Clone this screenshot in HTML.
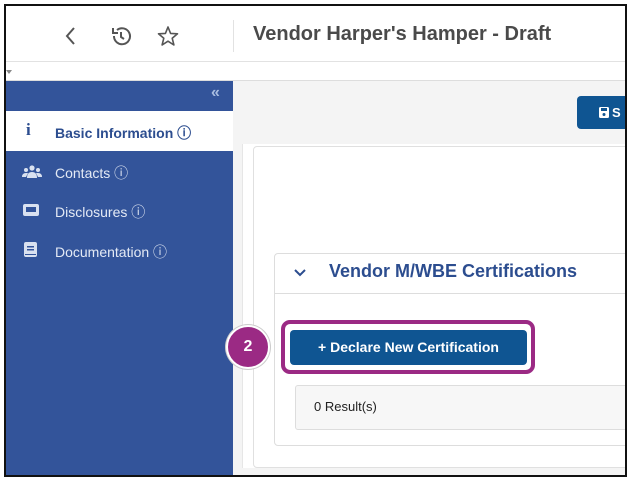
<!DOCTYPE html>
<html><head><style>
*{margin:0;padding:0;box-sizing:border-box}
body{width:632px;height:484px;background:#fff;font-family:"Liberation Sans",sans-serif;position:relative;overflow:hidden}
.frame{position:absolute;left:4px;top:4px;width:623px;height:473px;border:2px solid #111;overflow:hidden;background:#fff}
.abs{position:absolute}
</style></head><body>
<div class="frame">
 <!-- header -->
 <div class="abs" style="left:0;top:0;width:620px;height:56px;background:#fff;border-bottom:1px solid #e2e2e2"></div>
 <svg class="abs" style="left:56px;top:18px" width="140" height="24" viewBox="0 0 140 24">
  <path d="M12 4 L5 12 L12 20" fill="none" stroke="#555" stroke-width="2"/>
  <path d="M52 12 A8 8 0 1 0 55 6" fill="none" stroke="#555" stroke-width="2"/>
  <path d="M51 4 L51 9 L56 9" fill="none" stroke="#555" stroke-width="2"/>
  <path d="M59 8 L59 13 L62 15" fill="none" stroke="#555" stroke-width="2"/>
  <path d="M106 3 L108.6 9.4 L115.5 9.8 L110.2 14.2 L111.9 21 L106 17.2 L100.1 21 L101.8 14.2 L96.5 9.8 L103.4 9.4 Z" fill="none" stroke="#555" stroke-width="1.6" stroke-linejoin="round"/>
 </svg>
 <div class="abs" style="left:227px;top:14px;width:1px;height:32px;background:#e2e2e2"></div>
 <div class="abs" style="left:247px;top:17px;font-size:20px;font-weight:bold;color:#4a4a4a">Vendor Harper's Hamper - Draft</div>
 <div class="abs" style="left:0;top:64px;width:0;height:0;border-left:3px solid transparent;border-right:3px solid transparent;border-top:4px solid #888"></div>
 <div class="abs" style="left:0;top:74px;width:620px;height:1px;background:#ddd"></div>
 <!-- main grey -->
 <div class="abs" style="left:227px;top:75px;width:400px;height:400px;background:#f4f4f4"></div>
 <div class="abs" style="left:571px;top:90px;width:60px;height:33px;background:#0f5592;border-radius:4px;color:#fff;font-size:13px;font-weight:bold;padding:9px 0 0 35px">S</div>
 <svg class="abs" style="left:593px;top:101px" width="10" height="11"><rect x="0" y="0" width="10" height="11" rx="1.5" fill="#fff"/><rect x="2" y="1" width="6" height="3" fill="#0f5592"/><circle cx="5" cy="7.5" r="1.5" fill="#0f5592"/></svg>
 <div class="abs" style="left:236px;top:138px;width:400px;height:324px;background:#fff;border-left:1px solid #e6e6e6"></div>
 <div class="abs" style="left:247px;top:140px;width:400px;height:322px;background:#fff;border:1px solid #e0e0e0;border-radius:4px"></div>
 <!-- card -->
 <div class="abs" style="left:268px;top:247px;width:400px;height:193px;background:#fff;border:1px solid #ddd;border-radius:4px"></div>
 <div class="abs" style="left:268px;top:287px;width:400px;height:1px;background:#ddd"></div>
 <svg class="abs" style="left:288px;top:262px" width="12" height="10"><path d="M1 2 L6 7 L11 2" fill="none" stroke="#2c4d8f" stroke-width="2"/></svg>
 <div class="abs" style="left:323px;top:255px;font-size:18px;font-weight:bold;color:#2c4d8f">Vendor M/WBE Certifications</div>
 <!-- sidebar -->
 <div class="abs" style="left:0;top:75px;width:227px;height:400px;background:#33549a"></div>
 <div class="abs" style="left:205px;top:78px;color:#a9bde0;font-size:16px;font-weight:bold">«</div>
 <div class="abs" style="left:0;top:105px;width:227px;height:40px;background:#fff"></div>
 <div class="abs" style="left:20px;top:114px;font-family:'Liberation Serif',serif;font-weight:bold;font-size:17px;color:#2c4d8f">i</div>
 <div class="abs" style="left:49px;top:117px;font-size:14px;font-weight:bold;color:#2c4d8f">Basic Information ⓘ</div>
 <svg class="abs" style="left:16px;top:159px" width="20" height="14"><circle cx="10" cy="3" r="2.6" fill="#d9e1f0"/><circle cx="4" cy="5" r="2" fill="#d9e1f0"/><circle cx="16" cy="5" r="2" fill="#d9e1f0"/><path d="M5 13 Q5 7 10 7 Q15 7 15 13Z M0 12 Q0 8 4 8 L6 8 L4 12Z M20 12 Q20 8 16 8 L14 8 L16 12Z" fill="#d9e1f0"/></svg>
 <div class="abs" style="left:49px;top:157px;font-size:14px;color:#e4eaf5">Contacts ⓘ</div>
 <svg class="abs" style="left:17px;top:198px" width="16" height="12"><rect x="0" y="0" width="16" height="12" rx="2" fill="#d9e1f0"/><rect x="3" y="3" width="10" height="5" fill="#33549a"/></svg>
 <div class="abs" style="left:49px;top:196px;font-size:14px;color:#e4eaf5">Disclosures ⓘ</div>
 <svg class="abs" style="left:18px;top:236px" width="13" height="15"><rect x="0" y="0" width="13" height="15" rx="2" fill="#d9e1f0"/><rect x="3" y="4" width="7" height="1.5" fill="#33549a"/><rect x="3" y="7" width="7" height="1.5" fill="#33549a"/><rect x="1" y="12" width="11" height="1" fill="#33549a"/></svg>
 <div class="abs" style="left:49px;top:236px;font-size:14px;color:#e4eaf5">Documentation ⓘ</div>
 <!-- highlight -->
 <div class="abs" style="left:275px;top:314px;width:254px;height:54px;border:4px solid #9b2a84;border-radius:9px;background:#fff"></div>
 <div class="abs" style="left:284px;top:324px;width:237px;height:35px;background:#0f5592;border-radius:4px;color:#fff;font-size:14px;font-weight:bold;text-align:center;line-height:35px">+ Declare New Certification</div>
 <div class="abs" style="left:220px;top:319px;width:44px;height:44px;border-radius:50%;background:#9b2a84;border:2px solid #fff;box-shadow:0 0 0 1px #ccc;color:#fff;font-weight:bold;font-size:16px;text-align:center;line-height:40px">2</div>
 <div class="abs" style="left:289px;top:379px;width:340px;height:45px;background:#f7f7f7;border:1px solid #ddd;border-radius:3px;font-size:13px;color:#222;padding:13px 0 0 18px">0 Result(s)</div>
</div>
</body></html>
